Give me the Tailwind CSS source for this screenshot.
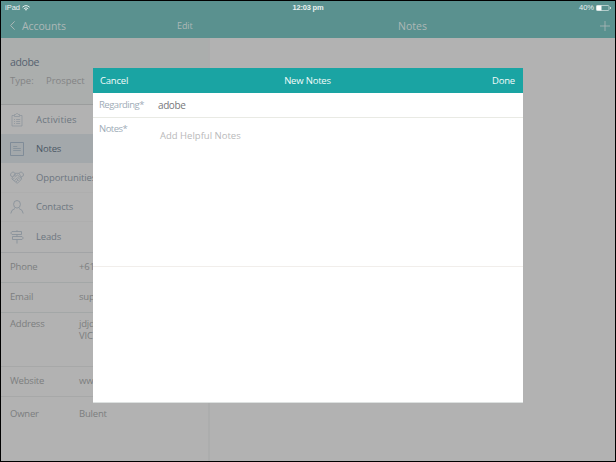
<!DOCTYPE html>
<html lang="en">
<head>
<meta charset="utf-8">
<title>Notes</title>
<script src="https://cdn.jsdelivr.net/npm/@tailwindcss/browser@4"></script>
</head>
<body class="w-[616px] h-[462px] overflow-hidden bg-black">
<div class="relative flex h-[462px] w-[616px] flex-col overflow-hidden border border-black bg-[#b2b2b2] font-['Open_Sans','Noto_Sans',sans-serif] text-[10px] leading-3 whitespace-nowrap text-[#838485]">
  <header class="h-[37px] shrink-0 bg-[#5a918f]">
    <div class="grid h-3 grid-cols-3 items-center pr-1 pl-[4px] font-['Liberation_Sans',sans-serif] text-[7.5px] leading-3 text-[#e8f0ef]">
      <div class="flex items-center gap-[2px]"><span>iPad</span>
        <svg class="h-[6px] w-[8px]" viewBox="0 0 8 6" fill="none" stroke="currentColor"><path d="M.4 2.2Q4-1 7.6 2.2M1.8 3.7Q4 1.8 6.2 3.7"/><path d="M2.9 4.5Q4 3.6 5.1 4.5L4 5.8Z" fill="currentColor" stroke="none"/></svg>
      </div>
      <div class="pt-px text-center font-bold tracking-[-.2px]">12:03 pm</div>
      <div class="flex items-center justify-end gap-[2px]"><span class="pt-px">40%</span>
        <svg class="h-[6px] w-[15px]" viewBox="0 0 15 6"><rect x=".5" y=".5" width="12.5" height="5" rx="1" fill="none" stroke="#c9dad9" stroke-width=".8"/><path d="M.5.5h5v5h-5z" fill="#fff"/><path d="M14 2h1v2h-1z" fill="#c9dad9"/></svg>
      </div>
    </div>
    <div class="flex h-[25px] items-center text-[#adb8b7]">
      <div class="flex w-[209px] items-center pl-[9px]">
        <svg class="h-[9px] w-[5px]" viewBox="0 0 5 9" fill="none" stroke="currentColor"><path d="M4.6.4.6 4.5l4 4.1"/></svg>
        <span class="ml-[7px] w-[155px] text-[10.5px] tracking-[-.1px]">Accounts</span>
        <span class="text-[9px] tracking-[-.1px]">Edit</span>
      </div>
      <div class="relative flex flex-1 items-center justify-center text-[10.5px]">Notes
        <svg class="absolute right-[5px] h-[10px] w-[10px]" viewBox="0 0 10 10" stroke="currentColor" stroke-width=".8"><path d="M5 0v10M0 5h10"/></svg>
      </div>
    </div>
  </header>
  <div class="flex min-h-0 flex-1">
    <aside class="w-[209px] shrink-0 border-r-2 border-[#acadad]">
      <section class="h-[67px] border-b border-[#9b9d9d] bg-[#abaead] pt-[18px] pl-[9px]">
        <h1 class="text-[10.5px] leading-3 tracking-[-.35px] text-[#566270]">adobe</h1>
        <div class="mt-[7px] flex text-[9.5px]"><span class="w-[36px]">Type:</span><span class="tracking-[-.05px]">Prospect</span></div>
      </section>
      <nav class="text-[9.5px] text-[#6d7680]">
        <div class="flex h-[29px] items-center pl-[9px]">
          <svg class="h-4 w-[14px] text-[#89929b]" viewBox="0 0 14 16" fill="none" stroke="currentColor" stroke-width=".7"><path d="M4 3.5H2V14h10V3.5h-2M4.5 4.5v-2h1.2Q7-.1 8.3 2.5h1.2v2zM4 7.5h1M6.2 7.5h4M4 9.5h1M6.2 9.5h4M4 11.5h1M6.2 11.5h4"/></svg>
          <span class="ml-[12px] tracking-[.15px]">Activities</span>
        </div>
        <div class="flex h-[29px] items-center bg-[#a3a8ab] pl-[9px] text-[#4c5966]">
          <svg class="h-[14px] w-[14px] text-[#7c8995]" viewBox="0 0 14 14" fill="none" stroke="currentColor" stroke-width=".9"><path d="M.5.5h13v13H.5z"/><path d="M3.2 4.5h4M3.2 6.5h7.6M3.2 8.5h7.6" stroke-width=".7"/></svg>
          <span class="ml-[12px] tracking-[-.2px]">Notes</span>
        </div>
        <div class="flex h-[30px] items-center border-b border-[#aeaeae] pl-[9px]">
          <svg class="h-[13px] w-[14px] text-[#89929b]" viewBox="0 0 14 13" fill="none" stroke="currentColor" stroke-width=".8"><path d="M.5 2.8 3 .8l2 1.5L3 6 .8 5zM13.5 2.8 11 .8 9 2.3 11 6l2.2-1zM5 2.3h4M5.5 3 4.5 5q1.3 1 3-1l3.7 3.3M2.5 6l-.6 2 4.6 3.8q1 .6 1.7-.3l3.4-3.3L11 6M3 8.5l1.5-1.8M4.5 9.8l1.7-1.9M6 11l1.7-1.8M7.5 6l2.6 2.7M6.3 7l2.3 3"/></svg>
          <span class="ml-[12px] tracking-[-.12px]">Opportunities</span>
        </div>
        <div class="flex h-[29px] items-center border-b border-[#aeaeae] pl-[9px]">
          <svg class="h-[14px] w-[14px] text-[#89929b]" viewBox="0 0 14 14" fill="none" stroke="currentColor" stroke-width=".9"><ellipse cx="7" cy="4.3" rx="3.4" ry="3.8"/><path d="M.8 13.5Q1.2 9.6 5 8.5M9 8.5q3.8 1.1 4.2 5"/></svg>
          <span class="ml-[12px] tracking-[-.2px]">Contacts</span>
        </div>
        <div class="flex h-[31px] items-center border-b border-[#a2a4a6] pl-[9px]">
          <svg class="h-[14px] w-[14px] text-[#89929b]" viewBox="0 0 14 14" fill="none" stroke="currentColor" stroke-width=".9"><path d="M2 1.5h9.5v3H2L.7 3zM2.5 6.5H12L13.3 8 12 9.5H2.5zM7 .2v1.3M7 4.5v2M7 9.5v4"/></svg>
          <span class="ml-[12px] tracking-[-.15px]">Leads</span>
        </div>
      </nav>
      <dl class="text-[9.5px] tracking-[-.2px] text-[#7c7e7f]">
        <div class="flex h-[30px] items-center border-b border-[#a3a7a7] pb-px pl-[9px]"><dt class="w-[69px]">Phone</dt><dd>+61</dd></div>
        <div class="flex h-[30px] items-center border-b border-[#a3a7a7] pb-px pl-[9px]"><dt class="w-[69px]">Email</dt><dd>support</dd></div>
        <div class="flex h-[54px] border-b border-[#a7a8a8] pt-[5px] pl-[9px]"><dt class="w-[69px]">Address</dt><dd>jdjd<br>VIC</dd></div>
        <div class="flex h-[30px] items-center border-b border-[#a7a8a8] pb-px pl-[9px]"><dt class="w-[69px]">Website</dt><dd>www</dd></div>
        <div class="flex h-[34px] items-center pl-[9px]"><dt class="w-[69px]">Owner</dt><dd>Bulent</dd></div>
      </dl>
    </aside>
    <main class="flex-1"></main>
  </div>

  <div class="absolute top-[67px] left-[92px] h-[335px] w-[430px] border-b border-[#dde1e0] bg-white">
    <div class="grid h-[25px] grid-cols-3 items-center bg-[#1aa4a3] pr-[8px] pl-[7px] text-[9.5px] tracking-[-.2px] text-[#f2fbfa]">
      <span>Cancel</span><span class="text-center">New Notes</span><span class="text-right">Done</span>
    </div>
    <div class="flex h-[25px] items-center border-b border-[#e9eae4] pl-[6px]">
      <label class="w-[59px] text-[9.5px] tracking-[-.5px] text-[#a0acb7]">Regarding*</label><span class="tracking-[-.4px] text-[#77777a]">adobe</span>
    </div>
    <div class="flex h-[149px] border-b border-[#f1eeeb] pl-[6px]">
      <label class="w-[61px] pt-[5px] text-[9.5px] tracking-[-.5px] text-[#a0acb7]">Notes*</label><span class="pt-[12px] text-[9.5px] text-[#b9b9ba]">Add Helpful Notes</span>
    </div>
  </div>
</div>
</body>
</html>
